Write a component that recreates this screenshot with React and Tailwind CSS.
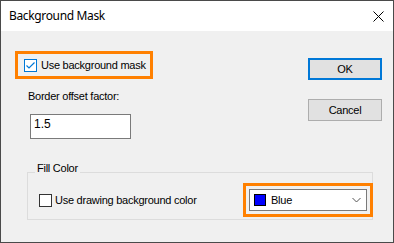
import React from "react";

const ctl = "font-['Liberation_Sans',Arial,sans-serif] text-[11px] leading-[13px] tracking-[-0.25px] text-black";

export default function App() {
  return (
    <div className="w-[394px] h-[243px] border border-[#4a4a4a] bg-[#f0f0f0] flex flex-col overflow-hidden">
      <div className="h-[30px] bg-white flex items-center justify-between pl-[8px] pr-[9px] shrink-0">
        <span className="font-['Noto_Sans',sans-serif] text-[12px] tracking-[-0.35px] text-black leading-[16px]">Background Mask</span>
        <svg width="11" height="11" viewBox="0 0 11 11">
          <path d="M0.5 0.5 L10.5 10.5 M10.5 0.5 L0.5 10.5" stroke="#000" strokeWidth="1" />
        </svg>
      </div>
      <div className="flex-1 flex flex-col">
        <div className="flex justify-between items-start">
          <div className="pl-[14px] pt-[20px] flex flex-col items-start">
            <div className="w-[138px] h-[28px] border-[3px] border-[#ff8000] flex items-center pl-[6px] gap-[4px]">
              <div className="w-[13px] h-[13px] border border-[#0078d7] bg-white flex items-center justify-center">
                <svg width="11" height="11" viewBox="0 0 11 11">
                  <path d="M1.5 5.5 L4 8 L9.5 2.5" stroke="#0078d7" strokeWidth="1.2" fill="none" />
                </svg>
              </div>
              <span className={ctl}>Use background mask</span>
            </div>
            <div className={ctl + " ml-[13px] mt-[11px]"}>Border offset factor:</div>
            <div className="ml-[15px] mt-[11px] w-[101px] h-[25px] border border-[#7a7a7a] bg-white pl-[3px] pt-[2px] font-['Liberation_Sans',Arial,sans-serif] text-[12px] leading-[14px] text-black">
              1.5
            </div>
          </div>
          <div className="pr-[11px] pt-[27px] flex flex-col gap-[19px]">
            <div className={ctl + " w-[74px] h-[22px] border-2 border-[#0078d7] bg-[#e1e1e1] flex items-center justify-center"}>OK</div>
            <div className={ctl + " w-[74px] h-[22px] border border-[#adadad] bg-[#e1e1e1] flex items-center justify-center"}>Cancel</div>
          </div>
        </div>
        <div className="relative ml-[26px] mt-[33px] w-[346px] h-[48px] border border-[#dcdcdc] pt-[10px] pl-[11px]">
          <span className={ctl + " absolute left-[7px] top-[-11px] bg-[#f0f0f0] px-[2px]"}>Fill Color</span>
          <div className="flex items-center justify-between h-[34px]">
            <div className="flex items-center gap-[3px]">
              <div className="w-[13px] h-[13px] border border-[#333] bg-white" />
              <span className={ctl + " tracking-[-0.1px]"}>Use drawing background color</span>
            </div>
            <div className="mr-[-1px] w-[130px] h-[34px] border-[3px] border-[#ff8000] p-[3px]">
              <div className="h-full border border-[#7a7a7a] bg-white flex items-center pl-[4px] pr-[5px]">
                <div className="w-[12px] h-[12px] border border-black bg-[#0000ff]" />
                <span className={ctl + " ml-[5px] flex-1"}>Blue</span>
                <svg width="9" height="6" viewBox="0 0 9 6">
                  <path d="M0.5 1 L4.5 5 L8.5 1" stroke="#555" strokeWidth="1" fill="none" />
                </svg>
              </div>
            </div>
          </div>
        </div>
      </div>
    </div>
  );
}
